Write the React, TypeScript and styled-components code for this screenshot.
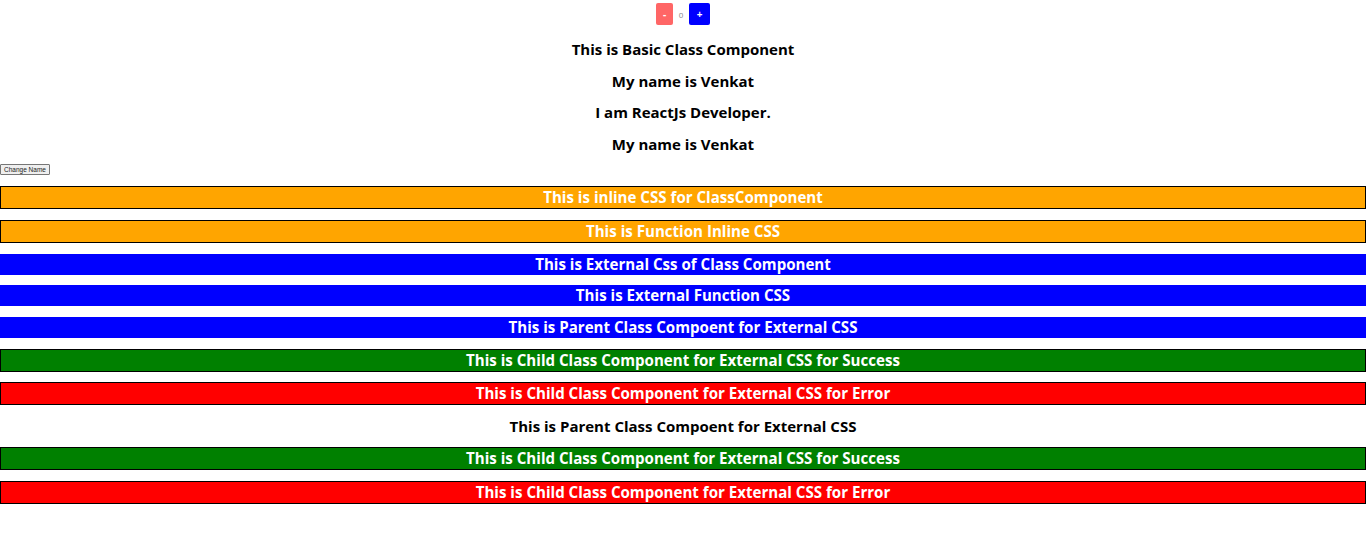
import React from "react";
import styled, { createGlobalStyle } from "styled-components";

const Global = createGlobalStyle`
  html, body { margin: 0; padding: 0; background: #fff; }
  body { font-family: "Open Sans", "Liberation Sans", sans-serif; }
`;

const Page = styled.div`
  display: flex;
  flex-direction: column;
  width: 1366px;
`;

const Counter = styled.div`
  display: flex;
  justify-content: center;
  align-items: center;
  padding-top: 3px;
  height: 22px;
`;

const CountButton = styled.button<{ $bg: string; $w: number }>`
  width: ${(p) => p.$w}px;
  height: 22px;
  padding: 0;
  border: none;
  border-radius: 2px;
  background: ${(p) => p.$bg};
  color: #fff;
  font-family: "Open Sans", sans-serif;
  font-size: 10px;
  font-weight: 700;
  line-height: 22px;
`;

const Count = styled.span`
  display: inline-block;
  width: 16px;
  text-align: center;
  color: #888;
  font-family: "Open Sans", sans-serif;
  font-size: 8px;
`;

const Lines = styled.div<{ $mt: number }>`
  display: flex;
  flex-direction: column;
  margin-top: ${(p) => p.$mt}px;
`;

const Line = styled.div`
  height: 31.7px;
  line-height: 31.7px;
  text-align: center;
  font-size: 15px;
  font-weight: 700;
  color: #000;
`;

const SmallButton = styled.button`
  align-self: flex-start;
  margin-top: 3px;
  width: 50px;
  height: 11px;
  padding: 0;
  border: 1px solid #767676;
  border-radius: 1px;
  background: #efefef;
  color: #222;
  font-family: "Liberation Sans", Arial, sans-serif;
  font-size: 6.5px;
  line-height: 9px;
  text-align: center;
`;

const Bar = styled.div<{ $bg: string; $bordered?: boolean; $mt: number }>`
  margin-top: ${(p) => p.$mt}px;
  height: 21px;
  line-height: 21px;
  background: ${(p) => p.$bg};
  border: ${(p) => (p.$bordered ? "1px solid #000" : "none")};
  text-align: center;
  color: #fff;
  font-size: 15.1px;
  font-weight: 700;
`;

export default function App() {
  return (
    <>
      <Global />
      <Page>
        <Counter>
          <CountButton $bg="#ff6666" $w={17}>-</CountButton>
          <Count>0</Count>
          <CountButton $bg="#0000ff" $w={21}>+</CountButton>
        </Counter>
        <Lines $mt={9}>
          <Line>This is Basic Class Component</Line>
          <Line>My name is Venkat</Line>
          <Line>I am ReactJs Developer.</Line>
          <Line>My name is Venkat</Line>
        </Lines>
        <SmallButton>Change Name</SmallButton>
        <Bar $bg="#ffa500" $bordered $mt={11}>This is inline CSS for ClassComponent</Bar>
        <Bar $bg="#ffa500" $bordered $mt={11}>This is Function Inline CSS</Bar>
        <Bar $bg="#0000ff" $mt={11}>This is External Css of Class Component</Bar>
        <Bar $bg="#0000ff" $mt={10}>This is External Function CSS</Bar>
        <Bar $bg="#0000ff" $mt={11}>This is Parent Class Compoent for External CSS</Bar>
        <Bar $bg="#008000" $bordered $mt={11}>This is Child Class Component for External CSS for Success</Bar>
        <Bar $bg="#ff0000" $bordered $mt={10}>This is Child Class Component for External CSS for Error</Bar>
        <Lines $mt={6}>
          <Line>This is Parent Class Compoent for External CSS</Line>
        </Lines>
        <Bar $bg="#008000" $bordered $mt={5}>This is Child Class Component for External CSS for Success</Bar>
        <Bar $bg="#ff0000" $bordered $mt={11}>This is Child Class Component for External CSS for Error</Bar>
      </Page>
    </>
  );
}
